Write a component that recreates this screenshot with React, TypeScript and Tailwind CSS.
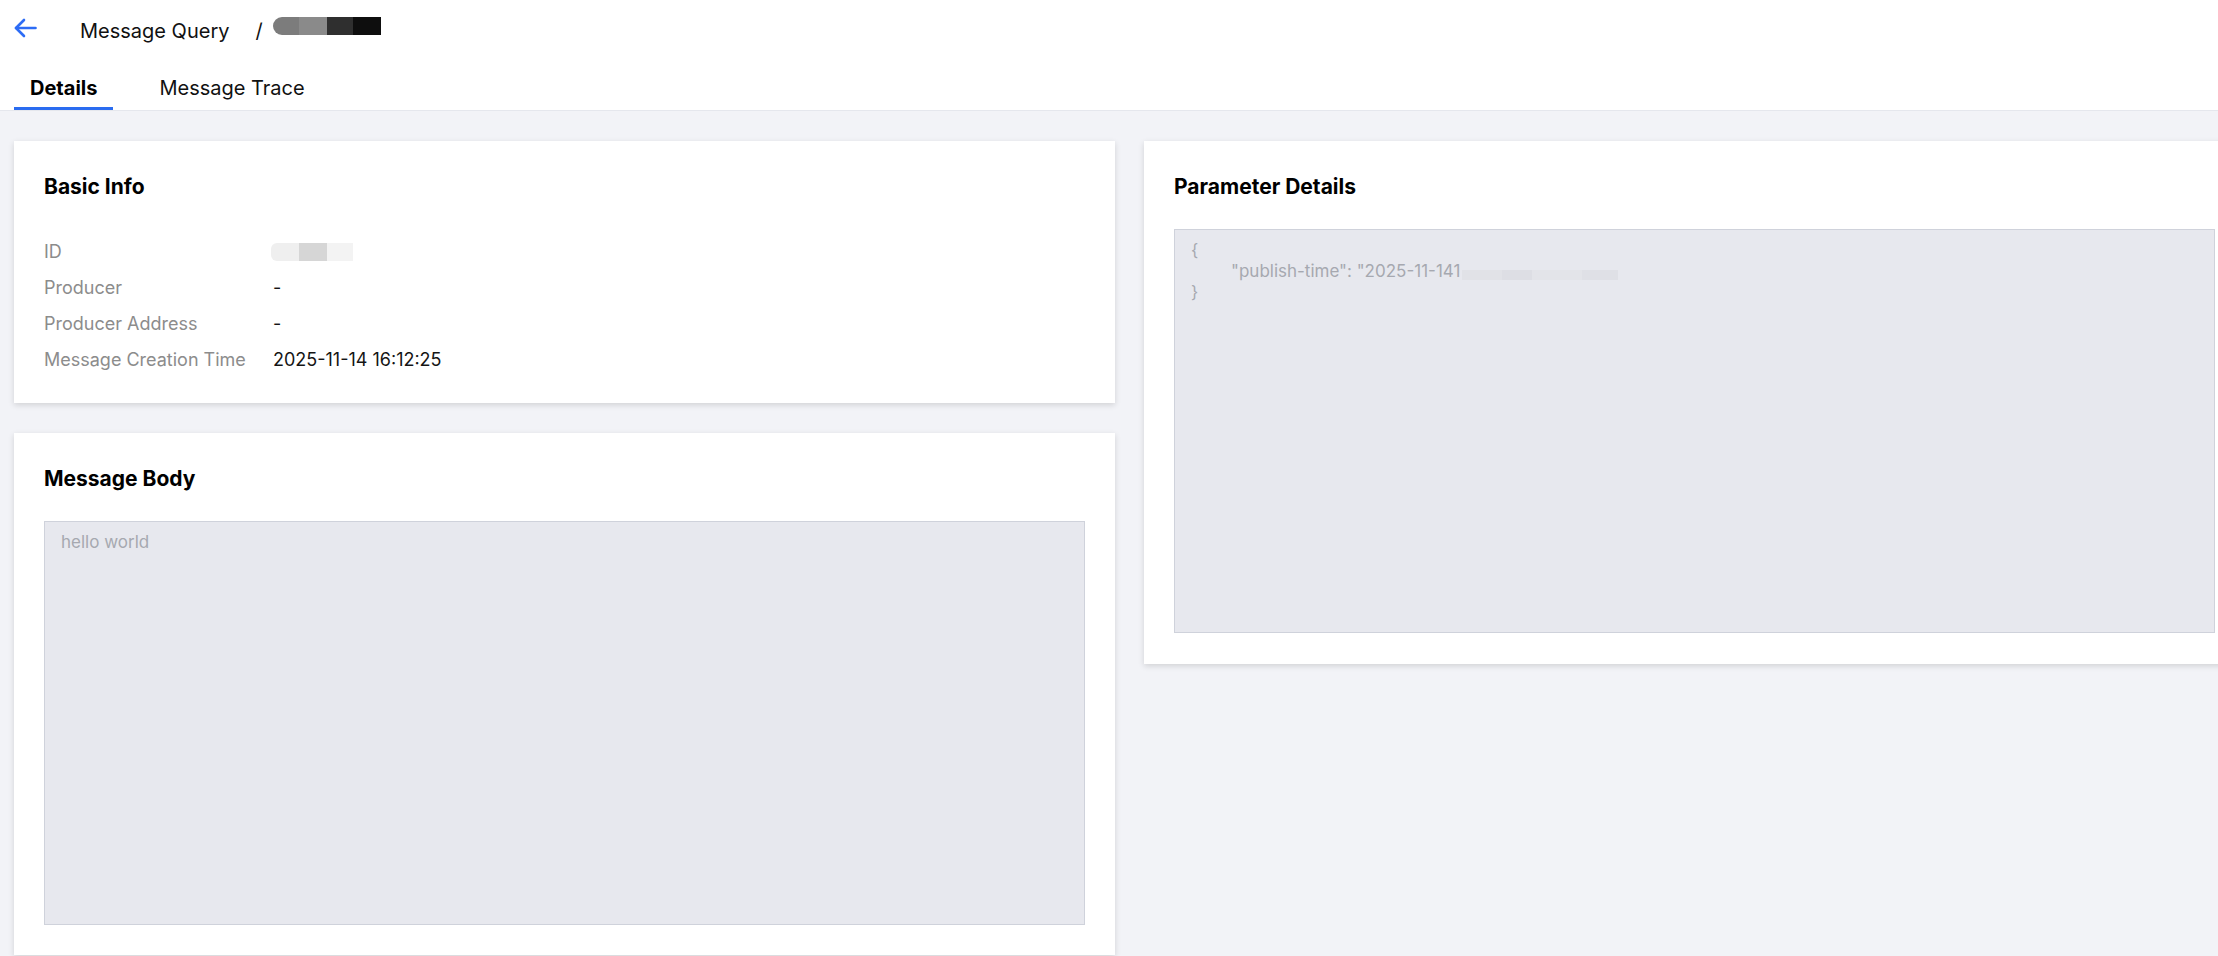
import React from "react";

const font = { fontFamily: "Inter, 'Noto Sans', sans-serif" };

const BackArrow: React.FC = () => (
	<svg width="23" height="20" viewBox="0 0 23 20" fill="none" stroke="#2d6cf5" strokeWidth="2.6" strokeLinecap="round" strokeLinejoin="round">
		<path d="M21.5 10H2" />
		<path d="M10 2 2 10l8 8" />
	</svg>
);

const Card: React.FC<{ title: string; children: React.ReactNode; className?: string }> = ({ title, children, className }) => (
	<div className={`bg-white shadow-[0_2px_6px_rgba(0,0,0,0.14)] px-[30px] pt-[30px] ${className ?? ""}`}>
		<div className="h-[32px] leading-[32px] text-[21px] font-bold text-black">{title}</div>
		{children}
	</div>
);

const Field: React.FC<{ label: string; children: React.ReactNode }> = ({ label, children }) => (
	<>
		<div className="h-[36px] leading-[36px] text-[18px] text-[#8c8c8c]">{label}</div>
		<div className="h-[36px] leading-[36px] text-[18px] text-[#151515] flex items-center">{children}</div>
	</>
);

const Box: React.FC<{ children: React.ReactNode }> = ({ children }) => (
	<div className="mt-[26px] h-[404px] bg-[#e7e8ee] border border-[#cfd2db] px-[16px] pt-[10px] text-[17px] leading-[21px] text-[#a6a8b0]">
		{children}
	</div>
);

export default function App() {
	return (
		<div className="h-screen w-full overflow-hidden bg-[#f2f3f7]" style={font}>
			{/* header */}
			<div className="bg-white border-b border-[#e5e7ed]">
				<div className="flex items-start h-[60px] pl-[14px]">
					<div className="mt-[18px]">
						<BackArrow />
					</div>
					<div className="ml-[43px] mt-[19px] leading-[24px] text-[20px] text-[#111]">Message Query</div>
					<div className="ml-[26px] mt-[19px] leading-[24px] text-[20px] text-[#111]">/</div>
					<div className="ml-[10px] mt-[17px] flex h-[18px]">
						<div className="w-[26px] bg-[#7c7c7c] rounded-l-full" />
						<div className="w-[28px] bg-[#8a8a8a]" />
						<div className="w-[26px] bg-[#2f2f2f]" />
						<div className="w-[28px] bg-[#0e0e0e]" />
					</div>
				</div>
				<div className="flex pl-[14px]">
					<div className="px-[16px] pt-[16px] pb-[7px] leading-[24px] text-[20px] font-bold text-black border-b-[3px] border-[#2a6cf0]">
						Details
					</div>
					<div className="ml-[30px] px-[16px] pt-[16px] pb-[10px] leading-[24px] text-[20px] text-[#111]">Message Trace</div>
				</div>
			</div>

			{/* body */}
			<div className="grid grid-cols-[1101px_1101px] gap-x-[29px] items-start pl-[14px] pt-[30px]">
				<div className="flex flex-col gap-[30px]">
					<Card title="Basic Info" className="h-[262px]">
						<div className="mt-[31px] grid grid-cols-[229px_1fr]">
							<Field label="ID">
								<div className="flex h-[18px] -ml-[2px]">
									<div className="w-[28px] bg-[#efefef] rounded-l-[6px]" />
									<div className="w-[28px] bg-[#d6d6d6]" />
									<div className="w-[26px] bg-[#f3f3f3]" />
								</div>
							</Field>
							<Field label="Producer">-</Field>
							<Field label="Producer Address">-</Field>
							<Field label="Message Creation Time">2025-11-14 16:12:25</Field>
						</div>
					</Card>
					<Card title="Message Body" className="pb-[30px]">
						<Box>hello world</Box>
					</Card>
				</div>

				<Card title="Parameter Details" className="pb-[31px]">
					<Box>
						<div>{"{"}</div>
						<div className="pl-[40px] flex items-center">
							<span>"publish-time": "2025-11-141</span>
							<span className="ml-[2px] flex h-[10px] mt-[6px]">
								<span className="w-[40px] bg-[#e1e2e7]" />
								<span className="w-[30px] bg-[#dddee4]" />
								<span className="w-[50px] bg-[#e3e4e9]" />
								<span className="w-[36px] bg-[#dfe0e6]" />
							</span>
						</div>
						<div>{"}"}</div>
					</Box>
				</Card>
			</div>
		</div>
	);
}
